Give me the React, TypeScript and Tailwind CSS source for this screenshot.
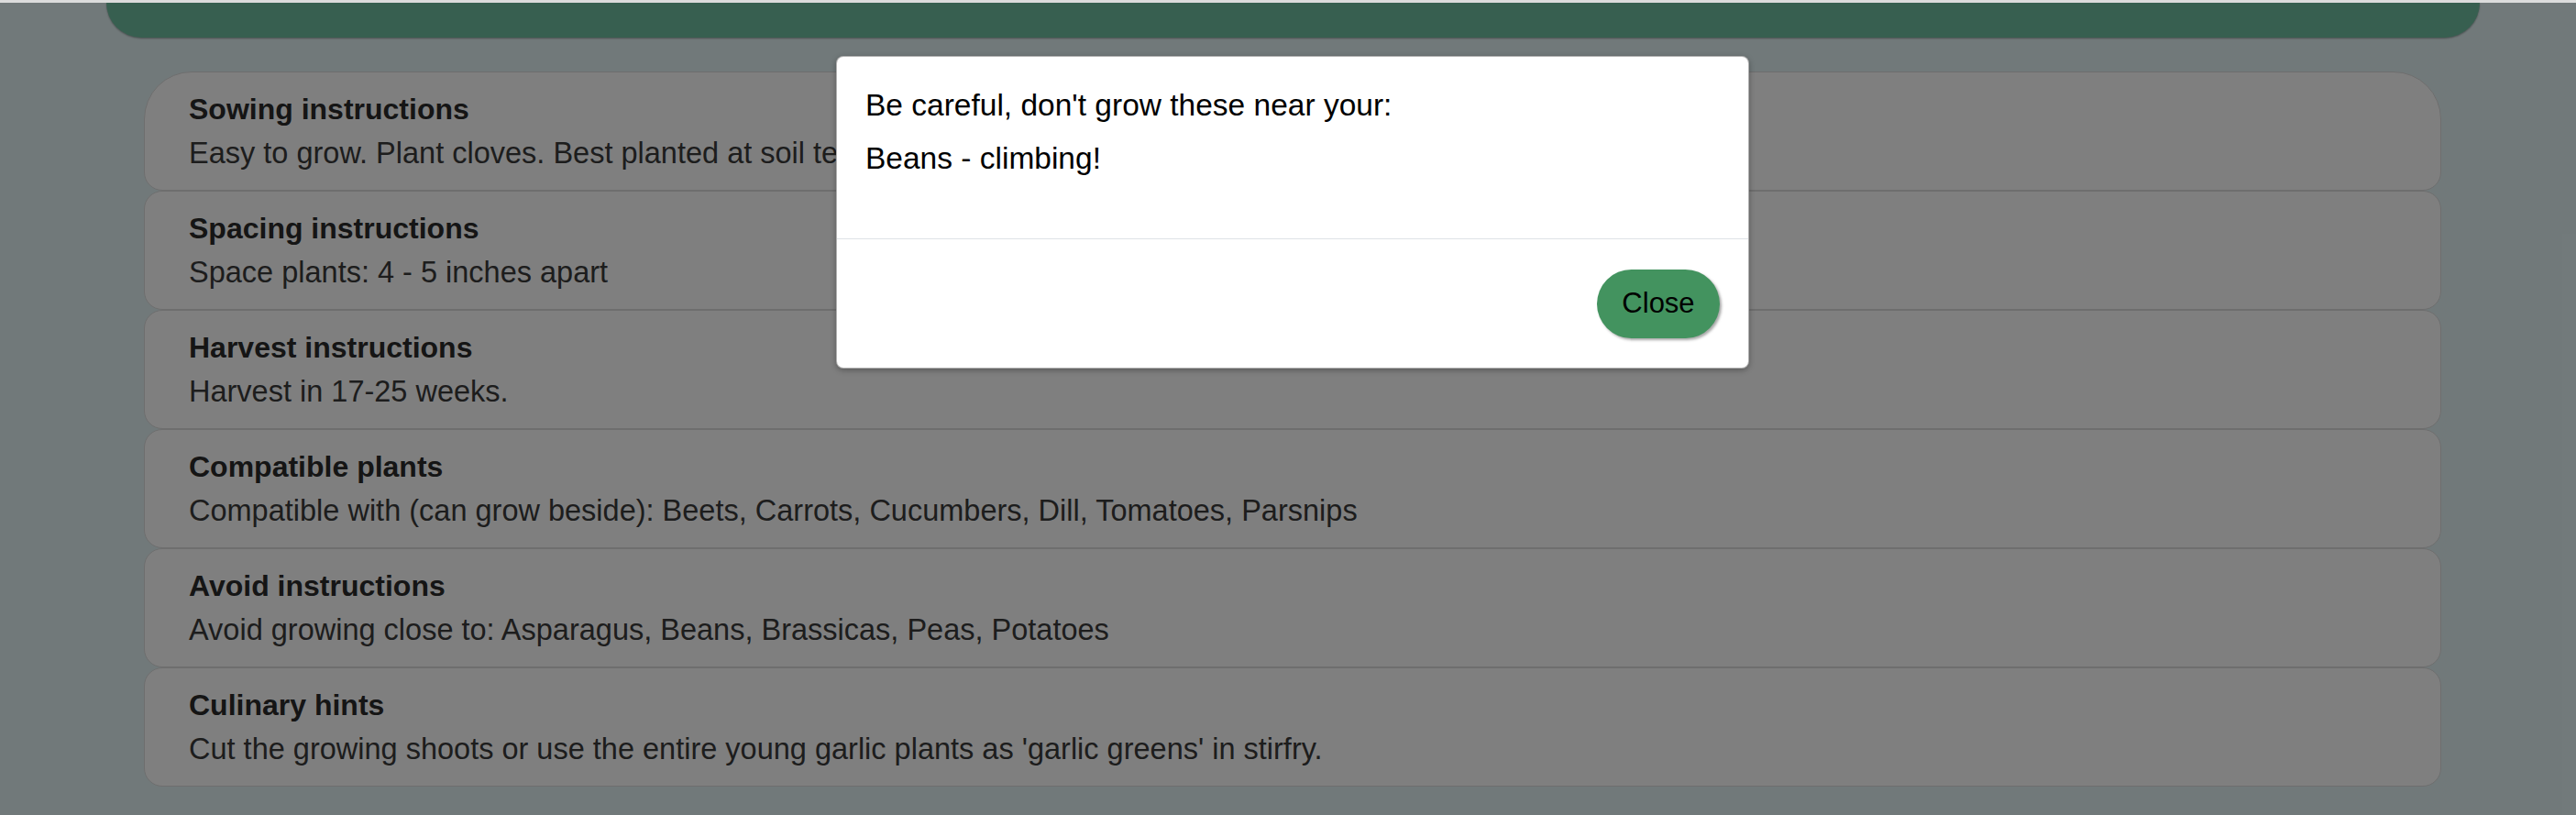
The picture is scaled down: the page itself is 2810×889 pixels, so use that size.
import React from 'react';

const sections = [
  {
    title: 'Sowing instructions',
    text: 'Easy to grow. Plant cloves. Best planted at soil temperatures between 10°C and 35°C.',
  },
  { title: 'Spacing instructions', text: 'Space plants: 4 - 5 inches apart' },
  { title: 'Harvest instructions', text: 'Harvest in 17-25 weeks.' },
  {
    title: 'Compatible plants',
    text: 'Compatible with (can grow beside): Beets, Carrots, Cucumbers, Dill, Tomatoes, Parsnips',
  },
  {
    title: 'Avoid instructions',
    text: 'Avoid growing close to: Asparagus, Beans, Brassicas, Peas, Potatoes',
  },
  {
    title: 'Culinary hints',
    text: "Cut the growing shoots or use the entire young garlic plants as 'garlic greens' in stirfry.",
  },
];

export default function App() {
  return (
    <div className="relative min-h-[889px] overflow-hidden bg-[#e3f3f5] font-['Liberation_Sans',Arial,sans-serif]">
      {/* Header strip */}
      <div className="ml-[116px] mr-[105px] mt-[3px] h-[38px] rounded-b-[40px] bg-[#6ebea0] shadow-[0_1px_2px_rgba(0,0,0,0.35)]" />

      {/* Plant details */}
      <div className="ml-[157px] mt-[37px] flex w-[2506px] flex-col">
        {sections.map((s, i) => (
          <div
            key={s.title}
            className={`h-[130px] border border-[#dcdcdc] bg-white px-[48px] pt-[20px] ${
              i === 0 ? 'rounded-t-[52px] rounded-b-[20px]' : 'rounded-[20px]'
            }`}
          >
            <div className="text-[32px] font-bold leading-[40px] text-[#2a2a2a]">{s.title}</div>
            <div className="mt-[8px] text-[32.5px] leading-[40px] text-[#3a3a3a]">{s.text}</div>
          </div>
        ))}
      </div>

      {/* Backdrop */}
      <div className="absolute inset-0 bg-black/50" />

      {/* Top border */}
      <div className="absolute left-0 top-0 h-[3px] w-full bg-[#dcdcdc]" />

      {/* Modal */}
      <div className="absolute left-[912px] top-[61px] w-[996px] rounded-[8px] border border-black/30 bg-white shadow-[0_2px_6px_rgba(0,0,0,0.3)]">
        <div className="px-[31px] pb-[67px] pt-[33px] text-[33.5px] leading-[40px] text-black">
          <p>Be careful, don't grow these near your:</p>
          <p className="mt-[18px]">Beans - climbing!</p>
        </div>
        <div className="flex justify-end border-t border-[#dee2e6] pb-[32px] pr-[31px] pt-[33px]">
          <button className="flex h-[75px] w-[134px] items-center justify-center rounded-full bg-[#43935f] text-[31px] text-black shadow-[2px_2px_3px_rgba(0,0,0,0.35)]">
            Close
          </button>
        </div>
      </div>
    </div>
  );
}
